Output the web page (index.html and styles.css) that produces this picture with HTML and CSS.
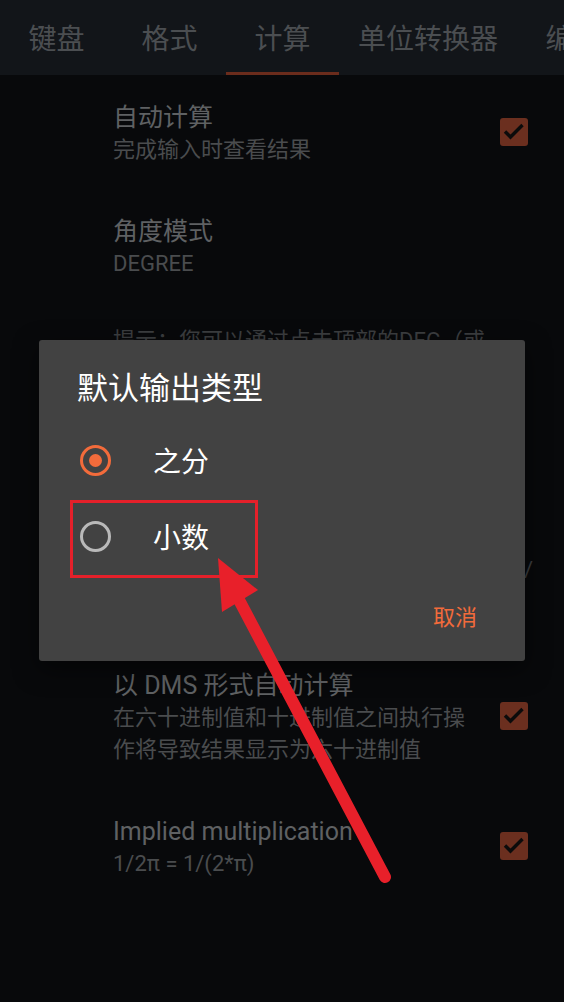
FILE: index.html
```html
<!DOCTYPE html>
<html>
<head>
<meta charset="utf-8">
<title>计算设置</title>
<link rel="stylesheet" href="styles.css">
</head>
<body>
<div class="tabs">
  <div class="tab">键盘</div>
  <div class="tab">格式</div>
  <div class="tab on">计算</div>
  <div class="tab">单位转换器</div>
  <div class="tab">编程</div>
</div>

<div class="prefs">
  <div class="pref">
    <div class="txt">
      <div class="tit">自动计算</div>
      <div class="sum">完成输入时查看结果</div>
    </div>
    <span class="chk"><svg viewBox="0 0 28 28"><polyline points="5,13.5 10.5,19 22.5,7" /></svg></span>
  </div>

  <div class="pref">
    <div class="txt">
      <div class="tit">角度模式</div>
      <div class="sum">DEGREE</div>
    </div>
  </div>

  <div class="pref hint">
    <div class="txt">
      <div class="sum">提示：您可以通过点击顶部的DEG（或RAD）按钮快速切换角度模式</div>
    </div>
  </div>

  <div class="pref hidden-row">
    <div class="txt">
      <div class="tit">默认输出类型</div>
      <div class="sum">之分</div>
      <div class="sum split"><span>例如 1</span><span>/</span></div>
    </div>
  </div>

  <div class="pref">
    <div class="txt">
      <div class="tit">以 DMS 形式自动计算</div>
      <div class="sum">在六十进制值和十进制值之间执行操作将导致结果显示为六十进制值</div>
    </div>
    <span class="chk"><svg viewBox="0 0 28 28"><polyline points="5,13.5 10.5,19 22.5,7" /></svg></span>
  </div>

  <div class="pref">
    <div class="txt">
      <div class="tit">Implied multiplication</div>
      <div class="sum">1/2π = 1/(2*π)</div>
    </div>
    <span class="chk"><svg viewBox="0 0 28 28"><polyline points="5,13.5 10.5,19 22.5,7" /></svg></span>
  </div>
</div>

<!-- 弹出对话框 -->
<div class="dialog">
  <div class="dlg-title">默认输出类型</div>
  <div class="choices">
    <div class="choice"><span class="radio sel"></span><span class="lbl">之分</span></div>
    <div class="choice"><span class="radio"></span><span class="lbl">小数</span></div>
  </div>
  <div class="dlg-btns"><span class="btn">取消</span></div>
</div>

<!-- 标注 -->
<svg class="mark" viewBox="0 0 564 1002">
  <rect x="71.5" y="501.5" width="185" height="75" fill="none" stroke="#e5202a" stroke-width="3" />
  <line x1="238" y1="598" x2="385" y2="877" stroke="#e8202a" stroke-width="12" stroke-linecap="round" />
  <polygon points="218,558 222,612 258,590" fill="#e8202a" />
</svg>
</body>
</html>
```

FILE: styles.css
```css
* {box-sizing: border-box;}
body {margin: 0; width: 564px; height: 1002px; overflow: hidden; position: relative; background: #08090b; font-family: Roboto, "Noto Sans CJK SC", sans-serif;}

/* 顶部标签 */
.tabs {display: flex; height: 75px; background: #121519; overflow: hidden;}
.tab {flex: none; display: flex; align-items: center; justify-content: center; min-width: 113px; padding: 0 19px 1px; font-size: 28px; color: #4b4e51; white-space: nowrap;}
.tab.on {box-shadow: inset 0 -3px 0 #6b2c1c;}

/* 设置列表 */
.prefs {padding-top: 2px;}
.pref {display: flex; align-items: center; padding: 25px 36px 25px 113px;}
.pref .txt {flex: 1; min-width: 0;}
.pref .tit {font-size: 25px; line-height: 32px; color: #5f6163;}
.pref .sum {font-size: 22px; line-height: 32px; color: #4a4c4e;}
.pref .chk {flex: none; width: 28px; height: 28px; margin: 0 0 4px 20px; border-radius: 3px; background: #6b2f1f;}
.pref .chk svg {display: block; width: 28px; height: 28px;}
.pref .chk polyline {fill: none; stroke: #0b0b0b; stroke-width: 3.4;}
.pref.hint {padding-top: 20px; padding-right: 40px; padding-bottom: 0;}
.pref.hint .sum {color: #3c3e40;}
.pref.hidden-row {padding: 101px 31px 59px 113px;}
.pref .split {display: flex; justify-content: space-between; color: #3c3e40;}

/* 对话框 */
.dialog {position: absolute; left: 39px; top: 340px; width: 486px; height: 321px; padding-top: 29px; background: #424242; border-radius: 3px; box-shadow: 0 8px 24px rgba(0,0,0,.5);}
.dlg-title {padding-left: 38px; font-size: 31px; line-height: 40px; color: #fff;}
.choices {margin-top: 13px;}
.choice {display: flex; align-items: center; height: 76px; padding-left: 41px;}
.radio {flex: none; width: 31px; height: 31px; border: 3px solid #b9b9b9; border-radius: 50%; display: flex; align-items: center; justify-content: center;}
.radio.sel {border-color: #f36b3b;}
.radio.sel::after {content: ""; width: 13px; height: 13px; border-radius: 50%; background: #f36b3b;}
.lbl {margin-left: 42px; font-size: 28px; color: #fff;}
.dlg-btns {display: flex; justify-content: flex-end; padding: 16px 48px 0 0;}
.btn {height: 56px; line-height: 56px; font-size: 22px; color: #f36b3b;}

.mark {position: absolute; left: 0; top: 0; width: 564px; height: 1002px; pointer-events: none;}
```
